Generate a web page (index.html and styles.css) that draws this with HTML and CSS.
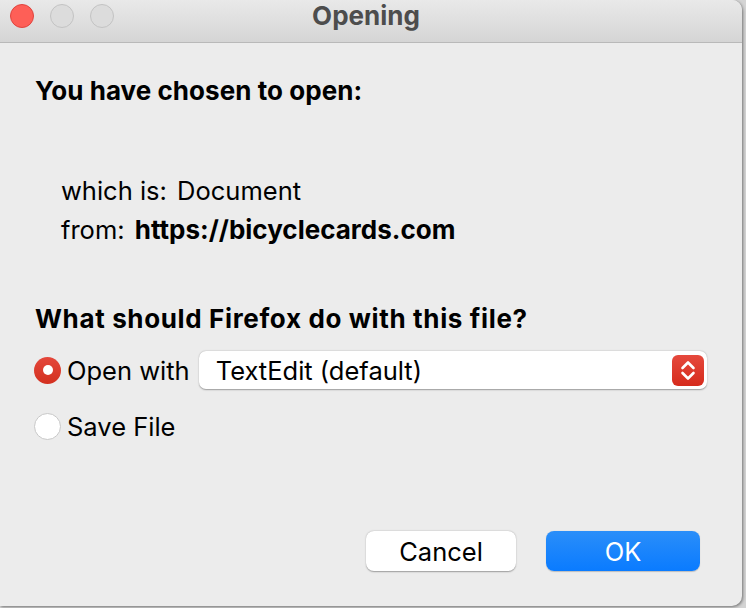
FILE: index.html
```html
<!DOCTYPE html>
<html>
<head>
<meta charset="utf-8">
<link rel="stylesheet" href="styles.css">
</head>
<body>
<div class="window">
  <div class="titlebar">
    <div class="lights">
      <span class="light red"></span>
      <span class="light gray"></span>
      <span class="light gray"></span>
    </div>
    <div class="title">Opening</div>
  </div>
  <div class="content">
    <div class="heading first">You have chosen to open:</div>
    <div class="info">
      <div class="line"><span class="label">which is:</span> <span>Document</span></div>
      <div class="line"><span class="label">from:</span> <b>https://bicyclecards.com</b></div>
    </div>
    <div class="heading second">What should Firefox do with this file?</div>
    <div class="row row-open">
      <span class="radio on"></span>
      <span class="rlabel">Open with</span>
      <div class="select">
        <span class="seltext">TextEdit (default)</span>
        <span class="stepper">
          <svg width="32" height="31" viewBox="0 0 32 31">
            <path d="M10.5 13 L16 7.5 L21.5 13" fill="none" stroke="#fff" stroke-width="2.6" stroke-linecap="round" stroke-linejoin="round"/>
            <path d="M10.5 18 L16 23.5 L21.5 18" fill="none" stroke="#fff" stroke-width="2.6" stroke-linecap="round" stroke-linejoin="round"/>
          </svg>
        </span>
      </div>
    </div>
    <div class="row row-save">
      <span class="radio off"></span>
      <span class="rlabel">Save File</span>
    </div>
    <div class="buttons">
      <button class="btn cancel">Cancel</button>
      <button class="btn ok">OK</button>
    </div>
  </div>
</div>
</body>
</html>
```
FILE: styles.css
```css
html, body {
  margin: 0;
  padding: 0;
}
body {
  width: 746px;
  height: 608px;
  background: #d4d4d4;
  overflow: hidden;
  font-family: Inter, "Liberation Sans", sans-serif;
  color: #000;
}
.window {
  width: 742px;
  height: 606px;
  background: #ececec;
  border-radius: 0 10px 10px 0;
  box-shadow: 1px 1px 3px rgba(0,0,0,0.45);
  display: flex;
  flex-direction: column;
  overflow: hidden;
}
.titlebar {
  height: 42px;
  flex: none;
  background: linear-gradient(#e9e9e9, #d5d5d5);
  border-bottom: 1px solid #b9b9b9;
  display: flex;
  align-items: center;
  justify-content: center;
  position: relative;
}
.lights {
  position: absolute;
  left: 10px;
  top: 4px;
  display: flex;
  gap: 16px;
}
.light {
  width: 24px;
  height: 24px;
  border-radius: 50%;
  box-sizing: border-box;
}
.light.red {
  background: #fe5f57;
  border: 1px solid #e0443e;
}
.light.gray {
  background: #dcdcdc;
  border: 1px solid #c3c3c3;
}
.title {
  font-weight: 700;
  font-size: 26px;
  color: #4d4d4d;
  margin-top: -12px;
  margin-right: 10px;
}
.content {
  flex: 1;
  display: flex;
  flex-direction: column;
  padding: 0 35px 0 35px;
}
.heading {
  font-weight: 700;
  font-size: 26px;
  line-height: 26px;
}
.heading.first {
  margin-top: 35px;
  letter-spacing: 0.05px;
}
.info {
  margin-top: 67px;
  padding-left: 26px;
  font-size: 25.5px;
  line-height: 39px;
}
.info b {
  font-size: 26px;
}
.info .label {
  margin-right: 3px;
}
.heading.second {
  margin-top: 57px;
  letter-spacing: 0.64px;
}
.row {
  display: flex;
  align-items: center;
  height: 40px;
  font-size: 25.5px;
}
.row-open {
  margin-top: 18px;
}
.row-save {
  margin-top: 16px;
}
.radio {
  width: 27px;
  height: 27px;
  border-radius: 50%;
  box-sizing: border-box;
  margin-left: -1px;
  margin-right: 6px;
  flex: none;
  display: flex;
  align-items: center;
  justify-content: center;
}
.radio.on {
  background: linear-gradient(#e4473b, #d3301f);
}
.radio.on::after {
  content: "";
  width: 10px;
  height: 10px;
  border-radius: 50%;
  background: #fff;
}
.radio.off {
  background: #fff;
  border: 1px solid #c8c8c8;
}
.rlabel {
  flex: none;
}
.select {
  margin-left: 9px;
  flex: 1;
  height: 38px;
  background: #fff;
  border-radius: 7px;
  box-shadow: 0 0.5px 1.5px rgba(0,0,0,0.35);
  display: flex;
  align-items: center;
  justify-content: space-between;
  padding: 0 3px 0 17px;
}
.stepper {
  width: 32px;
  height: 31px;
  border-radius: 6px;
  background: linear-gradient(#e5493d, #d62b1c);
  display: flex;
}
.buttons {
  margin-top: 85px;
  display: flex;
  justify-content: flex-end;
  gap: 30px;
  padding-right: 7px;
}
.btn {
  width: 150px;
  height: 40px;
  border-radius: 8px;
  border: none;
  font-family: Inter, "Liberation Sans", sans-serif;
  font-size: 25.5px;
  padding: 0;
}
.cancel {
  background: #fff;
  color: #000;
  box-shadow: 0 0.5px 1.5px rgba(0,0,0,0.35);
}
.ok {
  width: 154px;
  background: linear-gradient(#2a8ef9, #0a7bff);
  color: #fff;
  box-shadow: 0 0.5px 1px rgba(0,0,0,0.2);
}
```
